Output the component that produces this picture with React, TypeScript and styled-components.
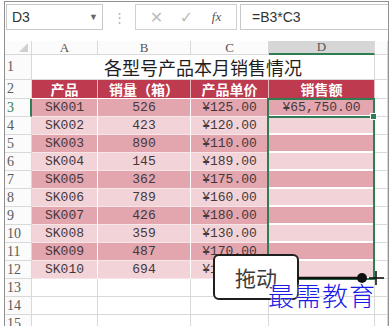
import styled, { createGlobalStyle } from "styled-components";

const Global = createGlobalStyle`
  html, body {
    margin: 0;
    padding: 0;
    background: #ffffff;
    font-family: "Liberation Sans", "Noto Sans CJK SC", sans-serif;
  }
`;

const GREEN = "#2f7d52";
const GRID = "#d9d9d9";

const Frame = styled.div`
  position: relative;
  width: 389px;
  height: 326px;
  overflow: hidden;
  background: #ffffff;
`;

const Window = styled.div`
  margin: 1px 0 0 4px;
  width: 383px;
  height: 325px;
  border: 1px solid #8f8f8f;
  border-bottom: none;
  background: #ffffff;
`;

const FormulaBar = styled.div`
  display: flex;
  align-items: flex-start;
  height: 39px;
  padding-top: 2px;
  box-sizing: border-box;
`;

const NameBox = styled.div`
  display: flex;
  align-items: center;
  justify-content: space-between;
  margin-left: 1px;
  width: 97px;
  height: 26px;
  box-sizing: border-box;
  border: 1px solid #c9c9c9;
  padding: 0 4px 0 5px;
  font-size: 14px;
  color: #333;
`;

const Arrow = styled.span`
  font-size: 9px;
  color: #666;
`;

const Dots = styled.div`
  width: 32px;
  height: 26px;
  display: flex;
  align-items: center;
  justify-content: center;
  color: #b5b5b5;
  font-size: 13px;
`;

const ToolBox = styled.div`
  display: flex;
  align-items: center;
  width: 102px;
  height: 26px;
  box-sizing: border-box;
  border: 1px solid #d0d0d0;
  padding-left: 12px;
  gap: 13px;
`;

const ToolIcon = styled.span<{ $dark?: boolean }>`
  width: 17px;
  text-align: center;
  font-family: ${({ $dark }) =>
    $dark ? '"Liberation Serif", serif' : '"DejaVu Sans", sans-serif'};
  font-style: ${({ $dark }) => ($dark ? "italic" : "normal")};
  font-size: ${({ $dark }) => ($dark ? "13px" : "16px")};
  color: ${({ $dark }) => ($dark ? "#555" : "#bdbdbd")};
`;

const FormulaInput = styled.div`
  flex: 1;
  height: 26px;
  margin-left: 3px;
  box-sizing: border-box;
  border: 1px solid #c9c9c9;
  border-right: none;
  display: flex;
  align-items: center;
  padding-left: 11px;
  font-size: 14px;
  color: #333;
`;

const Sheet = styled.div`
  position: relative;
  display: grid;
  grid-template-columns: 27px 66px 93px 78px 106px 1fr;
  grid-template-rows: 14px 25px 19px repeat(13, 18px);
`;

const Corner = styled.div`
  position: relative;
  background: #fbfbfb;
  border-right: 1px solid ${GRID};
  border-bottom: 1px solid ${GRID};

  &::after {
    content: "";
    position: absolute;
    right: 3px;
    bottom: 2px;
    border-style: solid;
    border-width: 0 0 9px 9px;
    border-color: transparent transparent #d0d0d0 transparent;
  }
`;

const ColHead = styled.div<{ $active?: boolean }>`
  display: flex;
  align-items: center;
  justify-content: center;
  background: ${({ $active }) => ($active ? "#d6d6d6" : "#fbfbfb")};
  border-right: 1px solid ${GRID};
  border-bottom: ${({ $active }) =>
    $active ? `2px solid ${GREEN}` : `1px solid ${GRID}`};
  font-family: "Liberation Serif", serif;
  font-size: 13px;
  color: #555;
`;

const RowHead = styled.div<{ $active?: boolean }>`
  display: flex;
  align-items: center;
  padding-left: 2px;
  background: #fbfbfb;
  border-right: ${({ $active }) =>
    $active ? `2px solid ${GREEN}` : `1px solid ${GRID}`};
  border-bottom: 1px solid ${GRID};
  font-family: "Liberation Serif", serif;
  font-size: 14px;
  color: ${({ $active }) => ($active ? GREEN : "#5a5a5a")};
`;

const TitleCell = styled.div`
  grid-column: 2 / span 4;
  display: flex;
  align-items: flex-end;
  justify-content: center;
  padding-bottom: 1px;
  border-right: 1px solid ${GRID};
  border-bottom: 1px solid ${GRID};
  font-family: "Noto Sans CJK SC", sans-serif;
  font-size: 18px;
  line-height: 22px;
  color: #1e1e1e;
`;

const HeadCell = styled.div`
  display: flex;
  align-items: center;
  justify-content: center;
  background: #bd3a4f;
  border-right: 1px solid #e6b9c0;
  border-bottom: 1px solid #ffffff;
  font-family: "Noto Sans CJK SC", sans-serif;
  font-weight: 700;
  font-size: 14px;
  color: #ffffff;
`;

const DataCell = styled.div<{ $dark: boolean; $last?: boolean }>`
  display: flex;
  align-items: center;
  justify-content: center;
  background: ${({ $dark }) => ($dark ? "#e3a5ae" : "#f2d3d8")};
  border-right: 1px solid #ffffff;
  border-bottom: ${({ $last }) => ($last ? "2px" : "1px")} solid
    ${({ $last }) => ($last ? "#ffffff" : "#f7e6e9")};
  font-family: "Liberation Mono", monospace;
  font-size: 13px;
  color: #45383b;
  white-space: nowrap;
`;

const BlankCell = styled.div`
  border-right: 1px solid ${GRID};
  border-bottom: 1px solid ${GRID};
`;

const Selection = styled.div<{ $rows: number }>`
  position: absolute;
  left: 262px;
  top: 57px;
  width: 108px;
  height: ${({ $rows }) => $rows * 18 + 2}px;
  box-sizing: border-box;
  border: 2px solid ${GREEN};
  pointer-events: none;
`;

const FillHandle = styled.div`
  position: absolute;
  right: -4px;
  bottom: -4px;
  width: 5px;
  height: 5px;
  background: ${GREEN};
  border: 1px solid #ffffff;
`;

const Callout = styled.div`
  position: absolute;
  left: 213px;
  top: 254px;
  width: 86px;
  height: 46px;
  box-sizing: border-box;
  border: 2.5px solid #1f1f1f;
  border-radius: 6px;
  background: #ffffff;
  display: flex;
  align-items: center;
  justify-content: center;
  font-family: "Noto Sans CJK SC", sans-serif;
  font-size: 21px;
  color: #3a3a3a;
`;

const DragMark = styled.svg`
  position: absolute;
  left: 298px;
  top: 268px;
`;

const Watermark = styled.div`
  position: absolute;
  left: 268px;
  top: 276px;
  font-family: "Noto Sans CJK SC", sans-serif;
  font-weight: 300;
  font-size: 26px;
  letter-spacing: 1px;
  color: #1a1ae6;
  text-shadow: 0 0 2px #ffffff, 0 0 2px #ffffff;
`;

const rows = [
  ["SK001", "526", "¥125.00"],
  ["SK002", "423", "¥120.00"],
  ["SK003", "890", "¥110.00"],
  ["SK004", "145", "¥189.00"],
  ["SK005", "362", "¥175.00"],
  ["SK006", "789", "¥160.00"],
  ["SK007", "426", "¥180.00"],
  ["SK008", "359", "¥130.00"],
  ["SK009", "487", "¥170.00"],
  ["SK010", "694", "¥150.00"],
];

export default function App() {
  return (
    <Frame>
      <Global />
      <Window>
        <FormulaBar>
          <NameBox>
            D3
            <Arrow>▼</Arrow>
          </NameBox>
          <Dots>⋮</Dots>
          <ToolBox>
            <ToolIcon>✕</ToolIcon>
            <ToolIcon>✓</ToolIcon>
            <ToolIcon $dark>fx</ToolIcon>
          </ToolBox>
          <FormulaInput>=B3*C3</FormulaInput>
        </FormulaBar>

        <Sheet>
          <Corner />
          {["A", "B", "C", "D"].map((c) => (
            <ColHead key={c} $active={c === "D"}>
              {c}
            </ColHead>
          ))}
          <ColHead />

          <RowHead>1</RowHead>
          <TitleCell>各型号产品本月销售情况</TitleCell>
          <BlankCell />

          <RowHead>2</RowHead>
          <HeadCell>产品</HeadCell>
          <HeadCell>销量（箱）</HeadCell>
          <HeadCell>产品单价</HeadCell>
          <HeadCell>销售额</HeadCell>
          <BlankCell />

          {rows.map((r, i) => {
            const dark = i % 2 === 0;
            return [
              <RowHead key={`h${i}`} $active={i === 0}>
                {i + 3}
              </RowHead>,
              <DataCell key={`a${i}`} $dark={dark}>
                {r[0]}
              </DataCell>,
              <DataCell key={`b${i}`} $dark={dark}>
                {r[1]}
              </DataCell>,
              <DataCell key={`c${i}`} $dark={dark}>
                {r[2]}
              </DataCell>,
              <DataCell key={`d${i}`} $dark={dark} $last>
                {i === 0 ? "¥65,750.00" : ""}
              </DataCell>,
              <BlankCell key={`e${i}`} />,
            ];
          })}

          {[13, 14, 15].map((n) => [
            <RowHead key={`h${n}`}>{n}</RowHead>,
            ...[0, 1, 2, 3, 4].map((k) => <BlankCell key={`${n}-${k}`} />),
          ])}

          <Selection $rows={10} />
          <Selection $rows={1}>
            <FillHandle />
          </Selection>
        </Sheet>
      </Window>

      <Callout>拖动</Callout>
      <DragMark width="90" height="22" viewBox="0 0 90 22">
        <line x1="0" y1="10" x2="62" y2="10" stroke="#111" strokeWidth="2.5" />
        <circle cx="64" cy="10" r="5" fill="#111" />
        <line x1="71" y1="10" x2="86" y2="10" stroke="#111" strokeWidth="1.6" />
        <line x1="78" y1="3" x2="78" y2="17" stroke="#111" strokeWidth="1.6" />
      </DragMark>
      <Watermark>最需教育</Watermark>
    </Frame>
  );
}
